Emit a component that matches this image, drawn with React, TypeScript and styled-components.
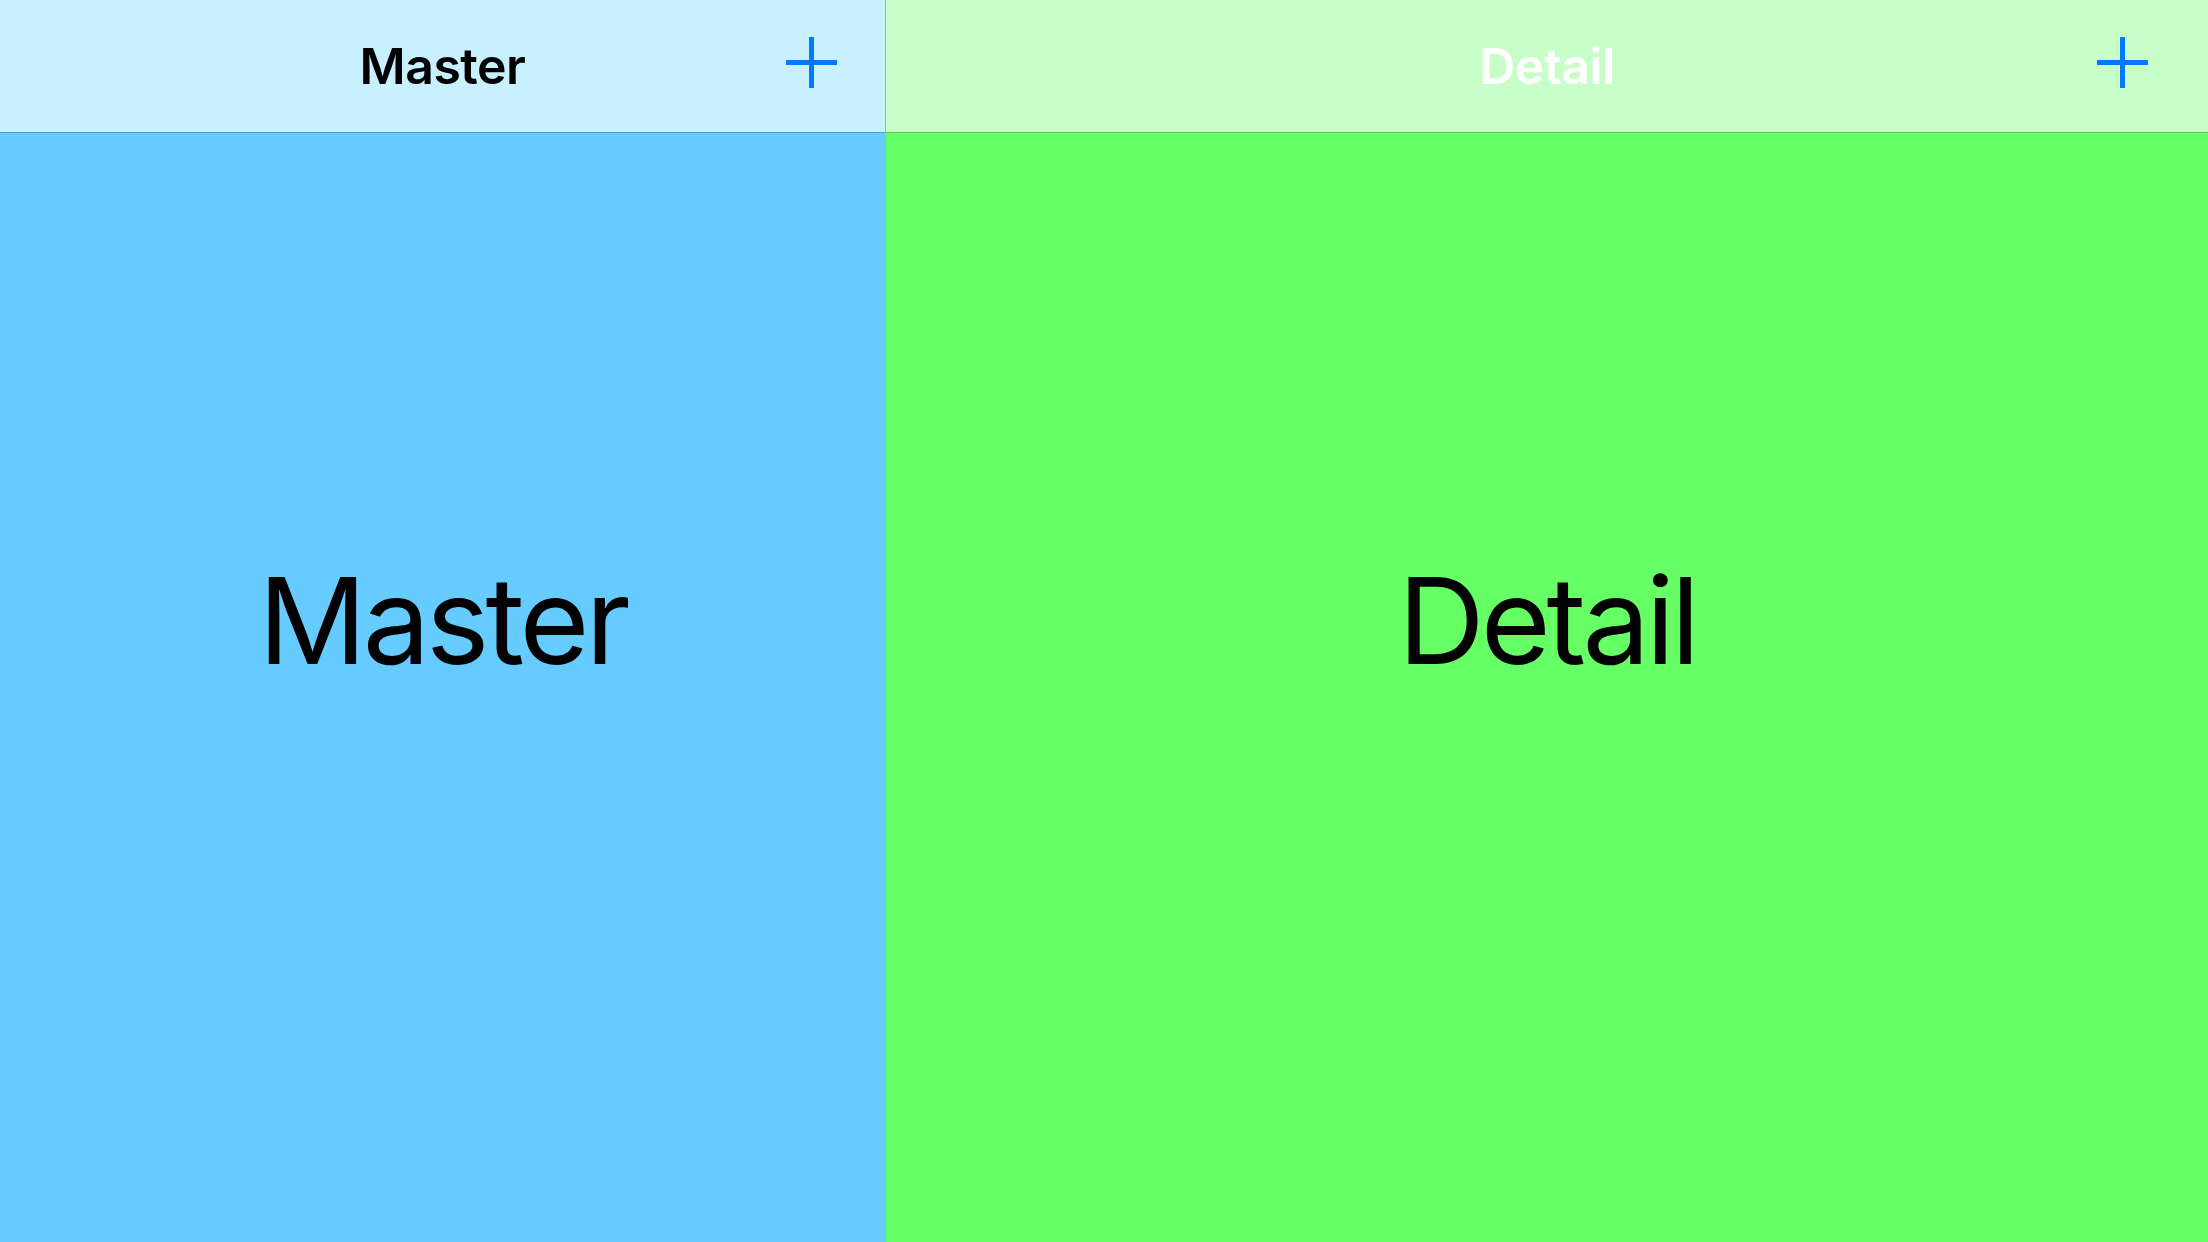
import React from "react";
import styled, { createGlobalStyle } from "styled-components";

const Global = createGlobalStyle`
  html, body {
    margin: 0;
    padding: 0;
    width: 100%;
    height: 100%;
    overflow: hidden;
  }
  body {
    font-family: Inter, "Noto Sans", "Liberation Sans", sans-serif;
  }
  #root { height: 100%; }
`;

const Split = styled.div`
  display: flex;
  width: 2208px;
  height: 1242px;
`;

const Panel = styled.section<{ $bg: string; $width?: string }>`
  position: relative;
  flex: ${(p) => (p.$width ? `0 0 ${p.$width}` : "1 1 auto")};
  height: 100%;
  background: ${(p) => p.$bg};
  display: flex;
  align-items: center;
  justify-content: center;
`;

const Divider = styled.div`
  flex: 0 0 1px;
  background: #a7b1b6;
`;

const NavBar = styled.header<{ $bg: string; $line: string; $pad: number }>`
  position: absolute;
  top: 0;
  left: 0;
  right: 0;
  height: 132px;
  box-sizing: content-box;
  border-bottom: 1px solid ${(p) => p.$line};
  background: ${(p) => p.$bg};
  display: grid;
  grid-template-columns: 1fr auto 1fr;
  align-items: center;
  padding-right: ${(p) => p.$pad}px;
  padding-left: ${(p) => p.$pad}px;
`;

const NavTitle = styled.h1<{ $color: string }>`
  grid-column: 2;
  margin: 0;
  font-size: 50px;
  font-weight: 600;
  letter-spacing: -0.5px;
  line-height: 1;
  color: ${(p) => p.$color};
`;

const AddButton = styled.button`
  grid-column: 3;
  justify-self: end;
  width: 51px;
  height: 51px;
  margin-bottom: 7px;
  padding: 0;
  border: 0;
  background: transparent;
  display: flex;
  cursor: pointer;
`;

const BigLabel = styled.div`
  font-size: 120px;
  font-weight: 400;
  letter-spacing: -4px;
  line-height: 1;
  color: #000;
`;

const PlusIcon = () => (
  <svg width="51" height="51" viewBox="0 0 51 51">
    <path d="M25.5 0V51M0 25.5H51" stroke="#007AFF" strokeWidth="5" fill="none" />
  </svg>
);

export default function App() {
  return (
    <>
      <Global />
      <Split>
        <Panel $bg="#66CCFF" $width="885px">
          <BigLabel>Master</BigLabel>
          <NavBar $bg="#C9F0FF" $line="#4F9FCC" $pad={48}>
            <NavTitle $color="#000">Master</NavTitle>
            <AddButton aria-label="Add">
              <PlusIcon />
            </AddButton>
          </NavBar>
        </Panel>
        <Divider />
        <Panel $bg="#66FF66">
          <BigLabel>Detail</BigLabel>
          <NavBar $bg="#C8FFC8" $line="#4FCC4F" $pad={60}>
            <NavTitle $color="#FFFFFF">Detail</NavTitle>
            <AddButton aria-label="Add">
              <PlusIcon />
            </AddButton>
          </NavBar>
        </Panel>
      </Split>
    </>
  );
}
